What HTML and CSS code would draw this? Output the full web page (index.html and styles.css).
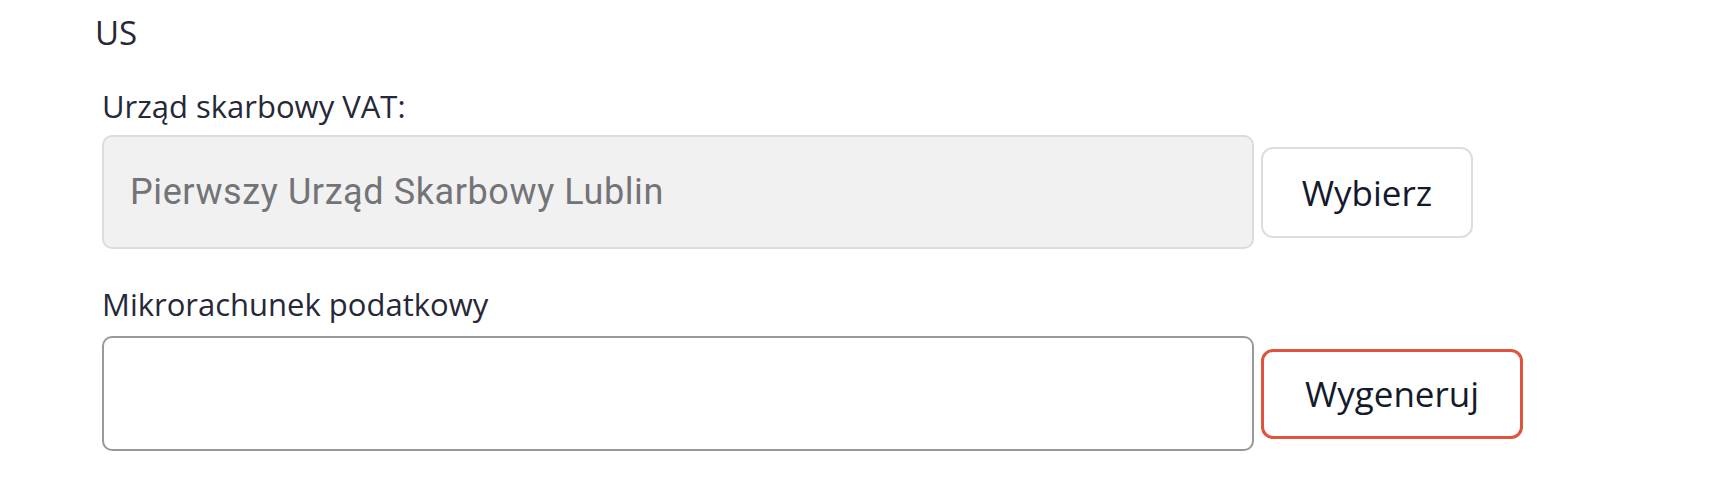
FILE: index.html
```html
<!DOCTYPE html>
<html lang="pl">
<head>
<meta charset="utf-8">
<title>US</title>
<link rel="stylesheet" href="styles.css">
</head>
<body>
<div class="page">
  <h2 class="section-title">US</h2>
  <div class="field">
    <label class="field-label">Urząd skarbowy VAT:</label>
    <div class="field-row">
      <div class="input input-readonly">Pierwszy Urząd Skarbowy Lublin</div>
      <button class="btn btn-select">Wybierz</button>
    </div>
  </div>
  <div class="field field-second">
    <label class="field-label">Mikrorachunek podatkowy</label>
    <div class="field-row">
      <div class="input input-empty"></div>
      <button class="btn btn-generate">Wygeneruj</button>
    </div>
  </div>
</div>
</body>
</html>
```

FILE: styles.css
```css
html, body {
  margin: 0;
  padding: 0;
  background: #ffffff;
}

.page {
  padding: 13px 0 0 95px;
  font-family: "Open Sans", "Noto Sans", sans-serif;
  color: #262838;
}

.section-title {
  margin: 0;
  font-size: 33px;
  line-height: 40px;
  font-weight: 400;
}

.field {
  margin: 34px 0 0 7px;
}

.field-second {
  margin-top: 36px;
}

.field-label {
  display: block;
  font-size: 31px;
  line-height: 38px;
  font-weight: 400;
  margin-bottom: 10px;
}

.field-second .field-label {
  margin-bottom: 13px;
}

.field-row {
  display: flex;
  align-items: center;
  gap: 7px;
}

.input {
  box-sizing: border-box;
  width: 1152px;
  height: 114px;
  border-radius: 10px;
  display: flex;
  align-items: center;
  padding-left: 26px;
  font-family: Roboto, "Noto Sans", sans-serif;
  font-size: 36px;
  letter-spacing: 0.6px;
  color: #737378;
}

.input-readonly {
  background: #f1f1f1;
  border: 2px solid #dcdcdc;
}

.input-empty {
  height: 115px;
  background: #ffffff;
  border: 2px solid #999999;
}

.btn {
  box-sizing: border-box;
  height: 91px;
  background: #ffffff;
  border-radius: 12px;
  font-family: "Open Sans", "Noto Sans", sans-serif;
  font-size: 35px;
  font-weight: 400;
  color: #141a2b;
  padding: 0;
  cursor: pointer;
}

.btn-select {
  width: 212px;
  border: 2px solid #dddddd;
}

.btn-generate {
  width: 262px;
  height: 90px;
  border: 3px solid #e0533e;
}
```
